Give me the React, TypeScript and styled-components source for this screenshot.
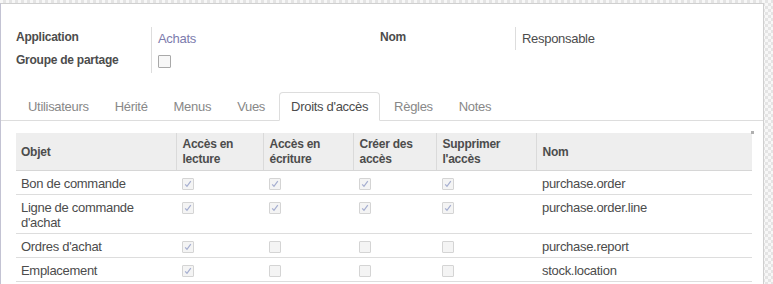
import styled, { createGlobalStyle } from 'styled-components'

const GlobalStyle = createGlobalStyle`
  html, body {
    margin: 0;
    padding: 0;
  }
  body {
    font-family: "Liberation Sans", Arial, sans-serif;
    font-size: 13px;
    letter-spacing: -0.3px;
    color: #4c4c4c;
    background-color: #f2f2f2;
    background-image: repeating-conic-gradient(#e4e4e4 0% 25%, #f7f7f7 0% 50%);
    background-size: 6px 6px;
    height: 284px;
    overflow: hidden;
  }
`

const Sheet = styled.div`
  margin-top: 3px;
  width: 764px;
  height: 290px;
  background: #fff;
  border: 1px solid #cfcfcf;
  border-left-color: #c3c3d3;
  box-sizing: border-box;
  position: relative;
`

const GroupRow = styled.div`
  display: flex;
  padding: 23px 0 0 15px;
`

const Group = styled.div<{ $width: number }>`
  width: ${(p) => p.$width}px;
  display: grid;
  grid-template-columns: 135px 1fr;
  grid-auto-rows: 23px;
`

const Label = styled.div`
  font-weight: bold;
  font-size: 12px;
  letter-spacing: -0.25px;
  display: flex;
  align-items: center;
  padding-bottom: 4px;
`

const Value = styled.div<{ $link?: boolean }>`
  border-left: 1px solid #ddd;
  padding-left: 6px;
  display: flex;
  align-items: center;
  color: ${(p) => (p.$link ? '#7c7bad' : '#4c4c4c')};
`

const Box = styled.span<{ $disabled?: boolean; $size: number }>`
  display: inline-flex;
  align-items: center;
  justify-content: center;
  width: ${(p) => p.$size}px;
  height: ${(p) => p.$size}px;
  border: 1px solid ${(p) => (p.$disabled ? '#d4d4d4' : '#a9a9a9')};
  background: ${(p) => (p.$disabled ? '#f4f4f4' : '#f7f7f7')};
  border-radius: 1px;
`

const Tabs = styled.div`
  display: flex;
  margin-top: 19px;
  padding-left: 15px;
  border-bottom: 1px solid #ddd;
  height: 28px;
`

const Tab = styled.div<{ $active?: boolean }>`
  padding: 0 11px;
  margin-right: 2px;
  display: flex;
  align-items: center;
  height: 29px;
  box-sizing: border-box;
  color: ${(p) => (p.$active ? '#4c4c4c' : '#888')};
  border: 1px solid ${(p) => (p.$active ? '#ddd' : 'transparent')};
  border-bottom-color: ${(p) => (p.$active ? '#fff' : 'transparent')};
  background: ${(p) => (p.$active ? '#fff' : 'transparent')};
  border-radius: 4px 4px 0 0;
  margin-bottom: -1px;
`

const TableWrap = styled.div`
  margin: 12px 0 0 15px;
  width: 736px;
`

const Table = styled.table`
  border-collapse: collapse;
  width: 736px;
  table-layout: fixed;
  line-height: 15px;
`

const Th = styled.th`
  background: #eee;
  text-align: left;
  font-weight: bold;
  font-size: 12px;
  letter-spacing: -0.25px;
  padding: 4px 5px 3px 6px;
  border-left: 1px solid #dadada;
  border-bottom: 1px solid #d6d6d6;
  vertical-align: middle;
  &:first-child {
    border-left: none;
    padding-left: 5px;
  }
`

const Td = styled.td`
  padding: 5px 5px 3px 6px;
  border-bottom: 1px solid #ddd;
  vertical-align: top;
  &:first-child {
    padding-left: 5px;
  }
`

const CellBox = styled.div`
  padding-top: 2px;
  height: 13px;
  line-height: 0;
`

const Handle = styled.span`
  position: absolute;
  left: 750px;
  top: 127px;
  width: 3px;
  height: 3px;
  background: #b0b0b0;
`

function Check({ on }: { on: boolean }) {
  return (
    <CellBox>
      <Box $disabled $size={10}>
        {on && (
          <svg width="8" height="8" viewBox="0 0 8 8">
            <path d="M1.2 4.3 L3 6.4 L6.8 1.2" fill="none" stroke="#a5aed0" strokeWidth="1.2" />
          </svg>
        )}
      </Box>
    </CellBox>
  )
}

const rows = [
  { name: 'Bon de commande', perms: [true, true, true, true], model: 'purchase.order' },
  { name: 'Ligne de commande d\'achat', perms: [true, true, true, true], model: 'purchase.order.line' },
  { name: 'Ordres d\'achat', perms: [true, false, false, false], model: 'purchase.report' },
  { name: 'Emplacement', perms: [true, false, false, false], model: 'stock.location' },
]

const tabs = ['Utilisateurs', 'Hérité', 'Menus', 'Vues', 'Droits d\'accès', 'Règles', 'Notes']

function App() {
  return (
    <>
      <GlobalStyle />
      <Sheet>
        <GroupRow>
          <Group $width={364}>
            <Label>Application</Label>
            <Value $link>Achats</Value>
            <Label>Groupe de partage</Label>
            <Value>
              <Box $size={11} />
            </Value>
          </Group>
          <Group $width={364}>
            <Label>Nom</Label>
            <Value>Responsable</Value>
          </Group>
        </GroupRow>
        <Tabs>
          {tabs.map((t) => (
            <Tab key={t} $active={t === 'Droits d\'accès'}>
              {t}
            </Tab>
          ))}
        </Tabs>
        <Handle />
        <TableWrap>
          <Table>
            <colgroup>
              <col style={{ width: 160 }} />
              <col style={{ width: 87 }} />
              <col style={{ width: 90 }} />
              <col style={{ width: 83 }} />
              <col style={{ width: 100 }} />
              <col style={{ width: 216 }} />
            </colgroup>
            <thead>
              <tr>
                <Th>Objet</Th>
                <Th>Accès en lecture</Th>
                <Th>Accès en écriture</Th>
                <Th>Créer des accès</Th>
                <Th>Supprimer l'accès</Th>
                <Th>Nom</Th>
              </tr>
            </thead>
            <tbody>
              {rows.map((r) => (
                <tr key={r.model}>
                  <Td>{r.name}</Td>
                  {r.perms.map((p, i) => (
                    <Td key={i}>
                      <Check on={p} />
                    </Td>
                  ))}
                  <Td>{r.model}</Td>
                </tr>
              ))}
            </tbody>
          </Table>
        </TableWrap>
      </Sheet>
    </>
  )
}

export default App
